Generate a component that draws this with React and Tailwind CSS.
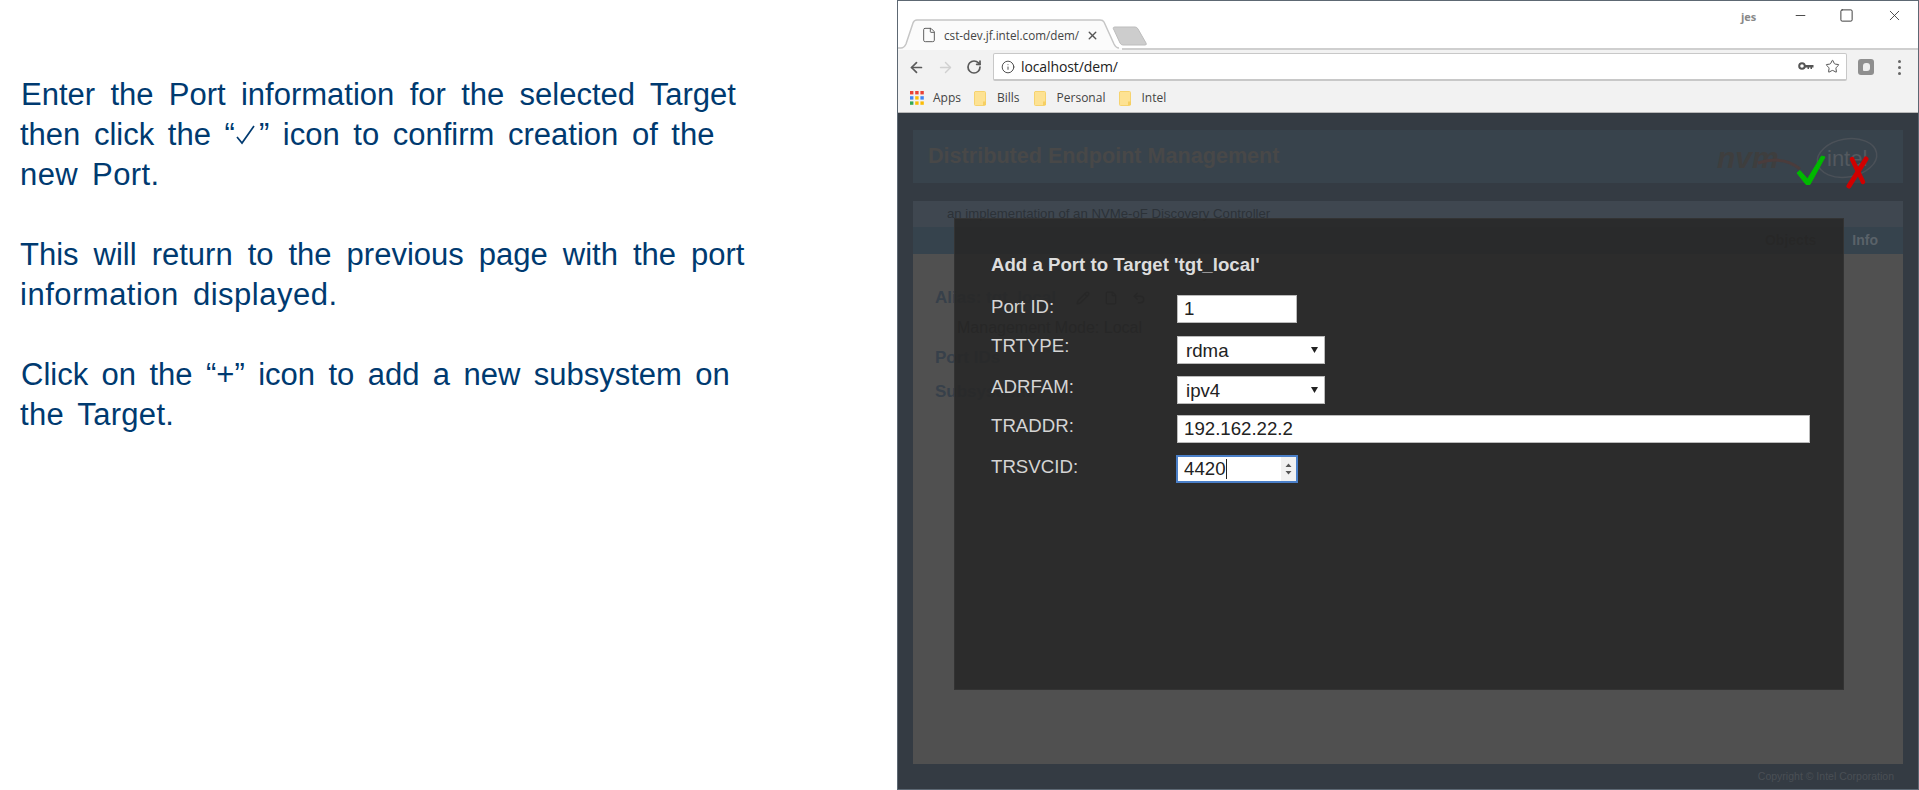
import React from "react";
import { ArrowLeft, ArrowRight, RotateCw, Info, Star, File, X, Minus, Square, Pencil, Undo2 } from "lucide-react";

const Folder = () => (
  <svg width="13" height="15" viewBox="0 0 13 15" className="shrink-0 block">
    <path d="M1 .5h9.5a1 1 0 0 1 1 1v12a1 1 0 0 1-1 1H1.5a1 1 0 0 1-1-1V1z" fill="#fde293" stroke="#f6d36f" />
    <rect x="9" y="10.5" width="3" height="3.5" fill="#f6cf62" />
  </svg>
);

const AppsIcon = () => {
  const c = ["#ea4335", "#ea4335", "#ea4335", "#4285f4", "#fbbc05", "#4285f4", "#34a853", "#fbbc05", "#fbbc05"];
  return (
    <svg width="14" height="14" viewBox="0 0 14 14" className="shrink-0">
      {c.map((f, i) => (
        <rect key={i} x={(i % 3) * 5.2} y={Math.floor(i / 3) * 5.2} width="3.4" height="3.4" fill={f} />
      ))}
    </svg>
  );
};

const Row = ({ label, labelClass, children }) => (
  <div className="flex items-start h-[40px]">
    <div className={`w-[186px] text-[18.670px] text-[#d4d4d4] ${labelClass}`}>{label}</div>
    {children}
  </div>
);

const fieldClass = "block h-[28px] bg-white text-[18.670px] text-[#222] border border-[#bbbbbb] outline-none font-['Liberation_Sans',sans-serif]";

const Select = ({ value }) => (
  <div className="relative mt-px">
    <select value={value} onChange={() => {}} className={`${fieldClass} w-[148px] pl-[8px] appearance-none`}>
      <option>{value}</option>
    </select>
    <svg width="8" height="6" viewBox="0 0 8 6" className="absolute right-[6px] top-[11px] pointer-events-none">
      <path d="M0 0h7L3.500 6z" fill="#222" />
    </svg>
  </div>
);

export default function App() {
  return (
    <div className="flex w-[1919px] h-[790px] overflow-hidden bg-white font-['Liberation_Sans',Arial,sans-serif]">
      {/* Left instructions */}
      <div className="w-[897px] shrink-0 pl-[21px] pt-[75px] text-[31px] leading-[40px] text-[#003a70] [word-spacing:5px]">
        <p className="whitespace-nowrap [word-spacing:6.700px]">Enter the Port information for the selected Target</p>
        <p className="whitespace-nowrap -ml-px">
          then click the “<span className="inline-block w-[24px] align-[-1px]"><svg width="22" height="22" viewBox="0 0 22 22"><path d="M2 13l5 6L19 2" fill="none" stroke="#003a70" strokeWidth="1.7" /></svg></span>” icon to confirm creation of the
        </p>
        <p className="-ml-px tracking-[0.4px]">new Port.</p>
        <p className="whitespace-nowrap -ml-px mt-[40px] [word-spacing:6.400px]">This will return to the previous page with the port</p>
        <p className="whitespace-nowrap -ml-px tracking-[0.5px]">information displayed.</p>
        <p className="whitespace-nowrap mt-[40px] [word-spacing:4.800px]">Click on the “+” icon to add a new subsystem on</p>
        <p className="-ml-px tracking-[0.3px]">the Target.</p>
      </div>

      {/* Browser window */}
      <div className="relative flex-1 flex flex-col border border-[#5d6873] font-['Open_Sans',sans-serif]">
        {/* Tab strip */}
        <div className="relative h-[49px] shrink-0 bg-white border-b-2 border-[#cfcfcf] flex items-start">
          <svg width="260" height="49" viewBox="0 0 260 49" className="absolute left-0 top-0">
            <path d="M0 47h3q3 0 5-4L15 22q1-3 4-3h183q3 0 4 2l10 22q2 4 5 4h3v2H0z" fill="#fbfbfb" />
            <path d="M0 47h3q3 0 5-4L15 22q1-3 4-3h183q3 0 4 2l10 22q2 4 5 4" fill="none" stroke="#c6c6c6" strokeWidth="1.5" />
            <path d="M216 29q-2-3 1-3h20q2 0 3 2l8 14q1 2-1 2h-22q-2 0-3-2z" fill="#cdcdcd" stroke="#bdbdbd" />
          </svg>
          <File size={16} strokeWidth={1.4} className="absolute left-[23px] top-[26px] text-[#555]" />
          <span className="absolute left-[46px] top-[25px] text-[11.700px] leading-[18px] text-[#444] whitespace-nowrap">cst-dev.jf.intel.com/dem/</span>
          <X size={13} strokeWidth={2.6} className="absolute left-[188px] top-[28px] text-[#555]" />
          <span className="absolute left-[843px] top-[8px] text-[11px] leading-[16px] text-[#888] font-bold">jes</span>
          <Minus size={15} strokeWidth={1.4} className="absolute left-[895px] top-[7px] text-[#333]" />
          <Square size={15} strokeWidth={1.5} className="absolute left-[941px] top-[7px] text-[#333]" />
          <X size={17} strokeWidth={1.2} className="absolute left-[988px] top-[6px] text-[#333]" />
        </div>

        {/* Toolbar */}
        <div className="h-[34px] shrink-0 bg-[#f2f2f2] flex items-center">
          <div className="w-[95px] pl-[10px] flex items-center gap-[12px] shrink-0">
            <ArrowLeft size={17} strokeWidth={2.4} className="text-[#5a5a5a]" />
            <ArrowRight size={17} strokeWidth={2} className="text-[#d0d0d0]" />
            <RotateCw size={16} strokeWidth={2.6} className="text-[#5a5a5a]" />
          </div>
          <div className="w-[854px] h-[28px] bg-white border border-[#c8c8c8] border-b-2 rounded-[2px] flex items-center pl-[7px] pr-[6px]">
            <Info size={14} strokeWidth={1.6} className="text-[#444] shrink-0" />
            <span className="ml-[6px] text-[14px] text-[#222] tracking-[-0.1px]">localhost/dem/</span>
            <svg width="16" height="9" viewBox="0 0 16 9" className="ml-auto mr-[11px]">
              <circle cx="4" cy="4" r="2.8" fill="none" stroke="#555" strokeWidth="2" />
              <path d="M7 3h8.500v2.500H14V7h-1.500V5.500H11V7H9.500V5.500H7z" fill="#555" />
            </svg>
            <Star size={15} strokeWidth={1.6} className="text-[#555]" />
          </div>
          <div className="ml-[11px] w-[16px] h-[16px] rounded-[3px] bg-[#8f8f8f] flex items-center justify-center shrink-0">
            <div className="w-[7px] h-[8px] rounded-[3px] rounded-bl-[1px] bg-[#eeeeee]" />
          </div>
          <div className="ml-[24px] flex flex-col gap-[3px] shrink-0">
            <div className="w-[3px] h-[3px] rounded-full bg-[#666]" />
            <div className="w-[3px] h-[3px] rounded-full bg-[#666]" />
            <div className="w-[3px] h-[3px] rounded-full bg-[#666]" />
          </div>
        </div>

        {/* Bookmarks */}
        <div className="h-[29px] shrink-0 bg-[#f2f2f2] border-b border-[#b9b9b9] flex items-center pl-[12px] text-[12px] text-[#444]">
          <AppsIcon />
          <span className="ml-[9px]">Apps</span>
          <span className="ml-[13px]"><Folder /></span>
          <span className="ml-[10px]">Bills</span>
          <span className="ml-[14px]"><Folder /></span>
          <span className="ml-[10px]">Personal</span>
          <span className="ml-[14px]"><Folder /></span>
          <span className="ml-[9px]">Intel</span>
        </div>

        {/* Dimmed page */}
        <div className="relative flex-1 min-h-0 bg-[#343b43] pt-[17px] px-[15px] flex flex-col font-['Liberation_Sans',sans-serif]">
          <div className="h-[53px] shrink-0 bg-[#38434c] flex items-center pl-[15px] text-[21.600px] font-bold text-[#484848]">
            Distributed Endpoint Management
          </div>
          <div className="h-[26px] mt-[18px] shrink-0 bg-[#3f4750] pl-[34px] text-[13.200px] leading-[26px] text-[#2c3238]">
            an implementation of an NVMe-oF Discovery Controller
          </div>
          <div className="h-[27px] shrink-0 bg-[#36434d] flex justify-end items-center text-[14px] font-bold pr-[25px] gap-[36px]">
            <span className="text-[#222222]">Objects</span>
            <span className="text-[#5a6269]">Info</span>
          </div>
          <div className="flex-1 min-h-0 bg-[#505050] pl-[22px] pt-[32px] text-[17px] leading-[24px] text-[#37404a] font-bold">
            <div className="flex items-center">
              <span>Alias: tgt_local</span>
              <Pencil size={14} strokeWidth={2.5} className="ml-[20px] text-[#222222]" />
              <File size={14} strokeWidth={2} className="ml-[14px] text-[#222222]" />
              <Undo2 size={14} strokeWidth={2.5} className="ml-[14px] text-[#222222]" />
            </div>
            <div className="mt-[6px] ml-[22px] font-normal text-[16px] text-[#222222]">Management Mode: Local</div>
            <div className="mt-[6px]">Port IDs</div>
            <div className="mt-[10px]">Subsystems</div>
          </div>
          <div className="h-[25px] shrink-0 flex items-center justify-end pr-[9px] text-[10.500px] text-[#4a4f55]">
            Copyright © Intel Corporation
          </div>

          {/* Logos over header */}
          <svg width="190" height="60" viewBox="0 0 190 60" className="absolute left-[818px] top-[8px]">
            <text x="1" y="47" fontFamily="'Liberation Sans',sans-serif" fontWeight="700" fontStyle="italic" fontSize="30" fill="#3e3e3e">nvm</text>
            <path d="M42 42q25-8 42 6" fill="none" stroke="#4a3c3c" strokeWidth="3" />
            <ellipse cx="131" cy="37" rx="30" ry="19" transform="rotate(-10 131 37)" fill="none" stroke="#4b5158" strokeWidth="1.500" />
            <text x="111" y="45" fontFamily="'Liberation Sans',sans-serif" fontSize="22" fill="#53595f">intel</text>
          </svg>

          {/* Modal */}
          <div className="absolute left-[56px] top-[105px] w-[890px] h-[472px] bg-[rgba(40,40,40,0.9)] border border-[#333333] pl-[36px] pt-[36px] text-[#d4d4d4]">
            <div className="text-[18.670px] leading-[20px] font-bold text-[#dddddd] mb-[20px]">Add a Port to Target 'tgt_local'</div>
            <Row label="Port ID:" labelClass="leading-[24px]">
              <input readOnly value="1" className={`${fieldClass} w-[120px] h-[27px] pl-[6px]`} />
            </Row>
            <Row label="TRTYPE:" labelClass="leading-[22px]">
              <Select value="rdma" />
            </Row>
            <Row label="ADRFAM:" labelClass="leading-[24px]">
              <Select value="ipv4" />
            </Row>
            <Row label="TRADDR:" labelClass="leading-[22px]">
              <input readOnly value="192.162.22.2" className={`${fieldClass} w-[633px] pl-[6px]`} />
            </Row>
            <Row label="TRSVCID:" labelClass="leading-[24px]">
              <div className="relative -ml-px w-[122px] h-[28px] bg-white border-2 border-[#4a7fc8] flex items-center pl-[6px] text-[18.670px] text-[#222]">
                <span>4420</span>
                <span className="w-px h-[20px] bg-[#222]" />
                <svg width="15" height="24" viewBox="0 0 15 24" className="absolute right-0 top-0 bg-[#f1f1f1]">
                  <path d="M4.500 10L7.500 6.500L10.500 10zM4.500 14l3 3.500 3-3.500z" fill="#555" />
                </svg>
              </div>
            </Row>
          </div>

          {/* Confirm / cancel icons */}
          <svg width="80" height="60" viewBox="0 0 80 60" className="absolute left-[897px] top-[20px]">
            <path d="M2 40L5 37.500L12.500 46L26.500 23L30 24L15 51.500L11 51.500z" fill="#00b800" stroke="#00b800" strokeLinejoin="round" />
            <path d="M54 53L71 26" fill="none" stroke="#d00000" strokeWidth="5" strokeLinecap="round" />
            <path d="M57 26L68 49" fill="none" stroke="#d00000" strokeWidth="4.500" strokeLinecap="round" />
          </svg>
        </div>
      </div>
    </div>
  );
}
